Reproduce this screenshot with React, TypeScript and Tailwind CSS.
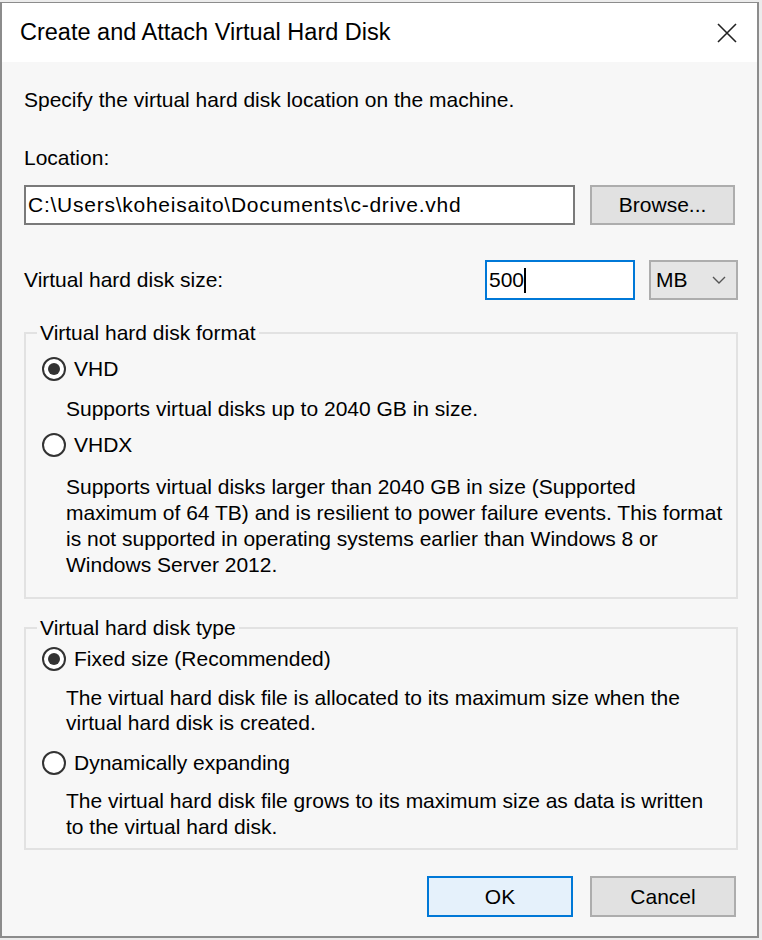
import { ReactNode } from "react";

const font = { fontFamily: '"Liberation Sans", Arial, sans-serif' };

const Radio = ({ checked }: { checked?: boolean }) => (
    <span className="w-[24px] h-[24px] rounded-full border-2 border-[#333333] bg-white flex items-center justify-center shrink-0">
        {checked && <span className="w-[12px] h-[12px] rounded-full bg-[#333333]" />}
    </span>
);

const RadioRow = ({ label, checked, className }: { label: string; checked?: boolean; className?: string }) => (
    <div className={`flex items-center gap-[8px] ${className ?? ""}`}>
        <Radio checked={checked} />
        <span>{label}</span>
    </div>
);

const GroupBox = ({ title, children, className }: { title: string; children: ReactNode; className?: string }) => (
    <fieldset className={`border-2 border-[#e2e2e2] pl-[16px] pr-[10px] w-[714px] ${className ?? ""}`}>
        <legend className="px-[3px] ml-[-5px] leading-[26px]">{title}</legend>
        {children}
    </fieldset>
);

export default function App() {
    return (
        <div className="w-[762px] h-[940px] bg-[#ececec] overflow-hidden text-black" style={font}>
            <div className="mt-[2px] w-[759px] h-[936px] border-2 border-t-[1px] border-[#8c8c8c] bg-[#f7f7f7] flex flex-col">
                {/* title bar */}
                <div className="h-[59px] bg-white flex items-center justify-between pl-[18px] pr-[18px] shrink-0">
                    <span className="text-[23.5px]">Create and Attach Virtual Hard Disk</span>
                    <svg width="22" height="22" viewBox="0 0 22 22" className="mr-[1px]">
                        <path d="M2 2 L20 20 M20 2 L2 20" stroke="#222" strokeWidth="1.6" />
                    </svg>
                </div>

                <div className="flex-1 px-[22px] text-[21px]">
                    <p className="mt-[25px] leading-[26px]">Specify the virtual hard disk location on the machine.</p>

                    <p className="mt-[32px] leading-[26px]">Location:</p>
                    <div className="mt-[14px] flex items-center">
                        <div className="w-[552px] h-[40px] bg-white border-2 border-[#7a7a7a] flex items-center px-[2px] whitespace-nowrap overflow-hidden tracking-[0.75px]">
                            C:\Users\koheisaito\Documents\c-drive.vhd
                        </div>
                        <button className="ml-[15px] w-[145px] h-[40px] bg-[#e1e1e1] border-2 border-[#adadad]">
                            Browse...
                        </button>
                    </div>

                    <div className="mt-[35px] flex items-center h-[40px] mr-[-3px]">
                        <span className="flex-1">Virtual hard disk size:</span>
                        <div className="w-[150px] h-[40px] bg-white border-2 border-[#0078d7] flex items-center px-[2px]">
                            500<span className="w-[2px] h-[25px] bg-black" />
                        </div>
                        <div className="ml-[14px] w-[89px] h-[40px] bg-[#e5e5e5] border-2 border-[#adadad] flex items-center justify-between pl-[5px] pr-[10px]">
                            <span>MB</span>
                            <svg width="14" height="8" viewBox="0 0 14 8">
                                <path d="M1 1 L7 7 L13 1" stroke="#555" strokeWidth="1.4" fill="none" />
                            </svg>
                        </div>
                    </div>

                    <GroupBox title="Virtual hard disk format" className="mt-[20px] h-[279px]">
                        <RadioRow label="VHD" checked className="mt-[3px] h-[40px]" />
                        <p className="pl-[24px] mt-[7px] leading-[26px]">Supports virtual disks up to 2040 GB in size.</p>
                        <RadioRow label="VHDX" className="mt-[3px] h-[40px]" />
                        <p className="pl-[24px] mt-[9px] leading-[26px] whitespace-nowrap">
                            Supports virtual disks larger than 2040 GB in size (Supported
                            <br />
                            maximum of 64 TB) and is resilient to power failure events. This format
                            <br />
                            is not supported in operating systems earlier than Windows 8 or
                            <br />
                            Windows Server 2012.
                        </p>
                    </GroupBox>

                    <GroupBox title="Virtual hard disk type" className="mt-[16px] h-[235px]">
                        <RadioRow label="Fixed size (Recommended)" checked className="h-[36px]" />
                        <p className="pl-[24px] mt-[8px] leading-[25px] whitespace-nowrap">
                            The virtual hard disk file is allocated to its maximum size when the
                            <br />
                            virtual hard disk is created.
                        </p>
                        <RadioRow label="Dynamically expanding" className="mt-[9px] h-[38px]" />
                        <p className="pl-[24px] mt-[6px] leading-[26px] whitespace-nowrap">
                            The virtual hard disk file grows to its maximum size as data is written
                            <br />
                            to the virtual hard disk.
                        </p>
                    </GroupBox>

                    <div className="mt-[26px] mr-[-1px] flex justify-end gap-[17px]">
                        <button className="w-[146px] h-[41px] bg-[#e5f1fb] border-2 border-[#0078d7]">OK</button>
                        <button className="w-[146px] h-[41px] bg-[#e1e1e1] border-2 border-[#adadad]">Cancel</button>
                    </div>
                </div>
            </div>
        </div>
    );
}
